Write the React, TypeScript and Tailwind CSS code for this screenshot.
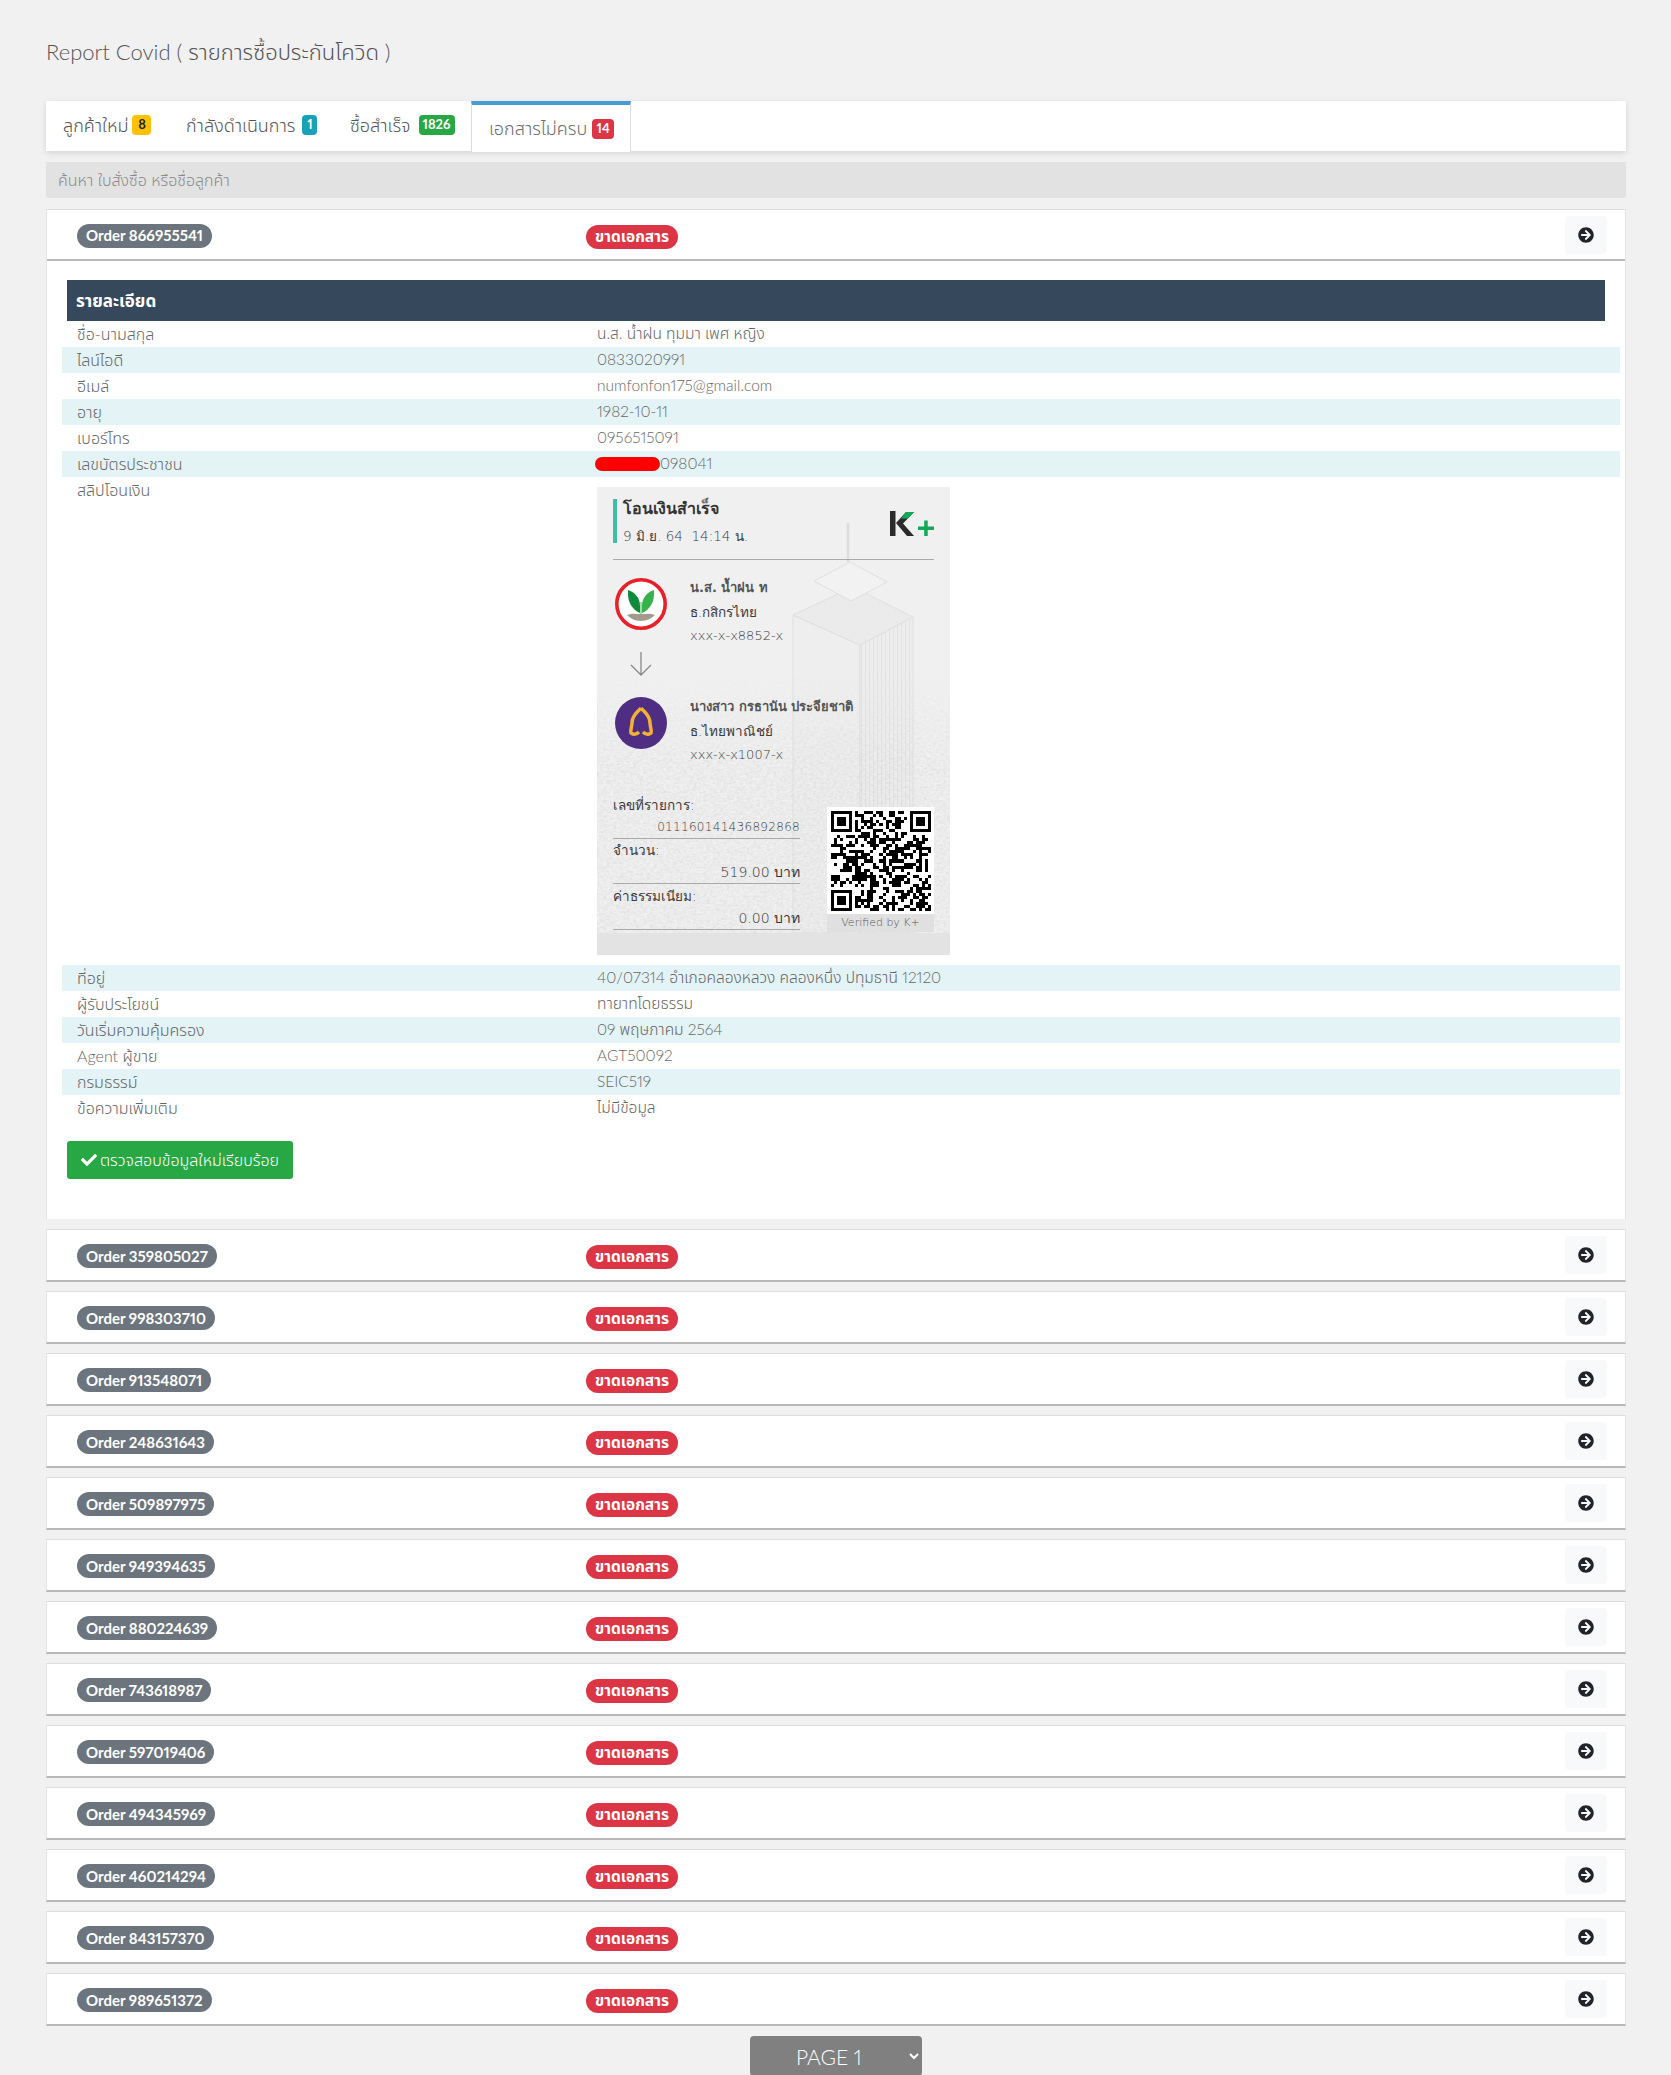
import { FaArrowCircleRight, FaCheck } from "react-icons/fa";

const font = "font-['Lato','Noto_Sans','Noto_Sans_Thai','Liberation_Sans',sans-serif]";

const orders = [
  "359805027",
  "998303710",
  "913548071",
  "248631643",
  "509897975",
  "949394635",
  "880224639",
  "743618987",
  "597019406",
  "494345969",
  "460214294",
  "843157370",
  "989651372",
];

const rowsTop = [
  { label: "ชื่อ-นามสกุล", value: "น.ส. น้ำฝน ทุมมา เพศ หญิง" },
  { label: "ไลน์ไอดี", value: "0833020991" },
  { label: "อีเมล์", value: "numfonfon175@gmail.com" },
  { label: "อายุ", value: "1982-10-11" },
  { label: "เบอร์โทร", value: "0956515091" },
];

const rowsBottom = [
  { label: "ที่อยู่", value: "40/07314 อำเภอคลองหลวง คลองหนึ่ง ปทุมธานี 12120" },
  { label: "ผู้รับประโยชน์", value: "ทายาทโดยธรรม" },
  { label: "วันเริ่มความคุ้มครอง", value: "09 พฤษภาคม 2564" },
  { label: "Agent ผู้ขาย", value: "AGT50092" },
  { label: "กรมธรรม์", value: "SEIC519" },
  { label: "ข้อความเพิ่มเติม", value: "ไม่มีข้อมูล" },
];

function Row({ label, value, striped }: { label: string; value: React.ReactNode; striped: boolean }) {
  return (
    <div className={`grid grid-cols-[535px_1fr] h-[26px] items-center ml-[15px] mr-[5px] text-[16px] font-light text-[#666] ${striped ? "bg-[#e4f3f6]" : ""}`}>
      <div className="pl-[15px]">{label}</div>
      <div className="text-[15.5px]">{value}</div>
    </div>
  );
}

function OrderHead({ id }: { id: string }) {
  return (
    <div className="flex items-center h-full pl-[30px] pr-[18px]">
      <div className="w-[509px] mt-[2px]">
        <span className="inline-flex items-center h-[24px] px-[9px] rounded-full bg-[#6c757d] text-white text-[15px] font-bold">Order {id}</span>
      </div>
      <span className="inline-flex items-center h-[24px] px-[9px] mt-[4px] rounded-full bg-[#dc3545] text-white text-[15.5px] font-bold">ขาดเอกสาร</span>
      <button className="ml-auto w-[42px] h-[38px] rounded-[4px] bg-[#f8f9fa] flex items-center justify-center">
        <FaArrowCircleRight className="text-[16px] text-[#212529]" />
      </button>
    </div>
  );
}

function Qr() {
  const n = 33;
  const cells: [number, number][] = [];
  let seed = 866955541;
  const inFinder = (x: number, y: number) => (x < 8 && y < 8) || (x > n - 9 && y < 8) || (x < 8 && y > n - 9);
  for (let y = 0; y < n; y++) {
    for (let x = 0; x < n; x++) {
      seed = (seed * 1103515245 + 12345) & 0x7fffffff;
      if (!inFinder(x, y) && (seed >> 16) % 100 < 50) cells.push([x, y]);
    }
  }
  const finder = (x: number, y: number) => (
    <g key={`${x}-${y}`}>
      <rect x={x} y={y} width="7" height="7" fill="#000" />
      <rect x={x + 1} y={y + 1} width="5" height="5" fill="#fff" />
      <rect x={x + 2} y={y + 2} width="3" height="3" fill="#000" />
    </g>
  );
  return (
    <svg viewBox={`0 0 ${n} ${n}`} className="w-[100px] h-[100px]" shapeRendering="crispEdges">
      {cells.map(([x, y]) => (
        <rect key={`${x}:${y}`} x={x} y={y} width="1" height="1" fill="#000" />
      ))}
      {finder(0, 0)}
      {finder(n - 7, 0)}
      {finder(0, n - 7)}
    </svg>
  );
}

function KbankLogo() {
  return (
    <svg viewBox="0 0 52 52" className="w-[52px] h-[52px] shrink-0">
      <circle cx="26" cy="26" r="24.2" fill="#fff" stroke="#e8202a" strokeWidth="3.6" />
      <path d="M13 12c6 2 12 7 12 16v7c-7-3-13-10-12-23z" fill="#0f8a3c" />
      <path d="M39 12c-6 2-12 7-12 16v7c7-3 13-10 12-23z" fill="#35b24a" />
      <path d="M25 24h2v13h-2z" fill="#9fdca8" />
      <path d="M12 37c5-2 9-1 14-1s9-1 14 1c-3 3-8 6-14 6s-11-3-14-6z" fill="#a39a8e" />
    </svg>
  );
}

function ScbLogo() {
  return (
    <svg viewBox="0 0 52 52" className="w-[52px] h-[52px] shrink-0">
      <circle cx="26" cy="26" r="26" fill="#4e2d82" />
      <path d="M26 11c3 4 9 7 9 15 0 4 2 7 1 10-3 2-6 1-8-1M26 11c-3 4-9 7-9 15 0 4-2 7-1 10 3 2 6 1 8-1" fill="none" stroke="#f2b134" strokeWidth="3.5" />
    </svg>
  );
}

function KPlusLogo() {
  return (
    <svg viewBox="0 0 44 26" className="w-[44px] h-[26px]">
      <rect x="0" y="0" width="5.5" height="25" fill="#2b2b2b" />
      <path d="M6 12 16 1h8L13 12.5 24 25h-7z" fill="#2b2b2b" />
      <path d="M16 1h8l-6 6.5h-7z" fill="#0fa958" />
      <rect x="28" y="15.5" width="16" height="3.5" fill="#0fa958" />
      <rect x="34.2" y="9.5" width="3.5" height="15.5" fill="#0fa958" />
    </svg>
  );
}

function SlipBackdrop() {
  return (
    <svg viewBox="0 0 353 468" className="absolute inset-0 w-full h-full">
      <defs>
        <filter id="paper" x="0" y="0" width="100%" height="100%">
          <feTurbulence type="fractalNoise" baseFrequency="0.3 0.45" numOctaves="3" seed="4" />
          <feColorMatrix values="0 0 0 0 0.62  0 0 0 0 0.62  0 0 0 0 0.62  0.8 0.8 0 0 -0.6" />
        </filter>
        <linearGradient id="fade" x1="0" y1="0" x2="0" y2="1">
          <stop offset="0" stopColor="#000" />
          <stop offset="0.42" stopColor="#000" />
          <stop offset="0.62" stopColor="#fff" />
        </linearGradient>
        <mask id="lower">
          <rect width="353" height="446" fill="url(#fade)" />
        </mask>
        <pattern id="stripes" width="4" height="4" patternUnits="userSpaceOnUse">
          <rect width="1.2" height="4" fill="#e2e2e2" />
        </pattern>
      </defs>
      <rect width="353" height="446" fill="#f0f0f0" />
      <g fill="#eeeeee" stroke="#e0e0e0" strokeWidth="1">
        <path d="M196 128 263 158v288h-67z" />
        <path d="M263 158 316 130v316h-53z" />
        <path d="M263 158 316 130v316h-53z" fill="url(#stripes)" stroke="none" />
        <path d="M196 128 256 100l60 30-53 28z" fill="#ebebeb" />
        <path d="M217 94 253 75l37 20-36 19z" fill="#f2f2f2" />
        <path d="M251 75V36" stroke="#dcdcdc" strokeWidth="2.5" />
      </g>
      <rect width="353" height="446" filter="url(#paper)" mask="url(#lower)" opacity="0.7" />
      <rect y="446" width="353" height="22" fill="#e3e3e3" />
    </svg>
  );
}

function Slip() {
  return (
    <div className="relative w-[353px] h-[468px] overflow-hidden font-['DejaVu_Sans','Noto_Sans',sans-serif] text-[#3a3a3a]">
      <SlipBackdrop />
      <div className="relative px-[16px] pt-[12px]">
        <div className="flex items-start justify-between border-b border-[#aaa] h-[61px]">
          <div className="border-l-4 border-[#3dbfa4] h-[44px] pl-[6px]">
            <div className="text-[16px] font-bold leading-[20px] text-[#333]">โอนเงินสำเร็จ</div>
            <div className="text-[13.5px] leading-[24px] mt-[5px]">9 มิ.ย. 64&nbsp;&nbsp;14:14 น.</div>
          </div>
          <div className="pt-[12px]">
            <KPlusLogo />
          </div>
        </div>
        <div className="flex gap-[23px] items-start h-[52px] mt-[18px] ml-[2px]">
          <KbankLogo />
          <div className="text-[13.5px] leading-[24px] -mt-[2px]">
            <div className="font-bold text-[13px] text-[#555]">น.ส. น้ำฝน ท</div>
            <div>ธ.กสิกรไทย</div>
            <div className="text-[13px]">xxx-x-x8852-x</div>
          </div>
        </div>
        <svg viewBox="0 0 24 24" className="w-[24px] h-[24px] ml-[16px] mt-[22px] text-[#888]" fill="none" stroke="currentColor" strokeWidth="1.3">
          <path d="M12 0v23M2 13l10 10 10-10" />
        </svg>
        <div className="flex gap-[23px] items-start h-[52px] mt-[21px] ml-[2px]">
          <ScbLogo />
          <div className="text-[13.5px] leading-[24px] -mt-[2px]">
            <div className="font-bold text-[13px] text-[#555] whitespace-nowrap">นางสาว กรธานัน ประจียชาติ</div>
            <div>ธ.ไทยพาณิชย์</div>
            <div className="text-[13px]">xxx-x-x1007-x</div>
          </div>
        </div>
        <div className="flex justify-between">
          <div className="w-[187px] text-[13.5px] leading-[22px] mt-[45px]">
            <div>เลขที่รายการ:</div>
            <div className="text-right border-b border-[#aaa] text-[12px] tracking-[0.3px]">011160141436892868</div>
            <div>จำนวน:</div>
            <div className="text-right border-b border-[#aaa] text-[14px] text-[#333]">519.00 บาท</div>
            <div className="mt-[1px]">ค่าธรรมเนียม:</div>
            <div className="text-right border-b border-[#aaa] text-[14px] text-[#333]">0.00 บาท</div>
          </div>
          <div className="w-[107px] mt-[58px]">
            <div className="bg-white h-[107px] flex items-center justify-center">
              <Qr />
            </div>
            <div className="bg-[#e0e0e0] h-[18px] text-[11px] leading-[18px] text-center text-[#555]">Verified by K+</div>
          </div>
        </div>
      </div>
    </div>
  );
}

export default function App() {
  return (
    <div className={`min-h-screen bg-[#f1f1f1] pl-[46px] pr-[45px] pt-[38px] overflow-hidden proportional-nums ${font}`}>
      <h1 className="h-[28px] text-[22px] leading-[28px] font-light text-[#555]">Report Covid ( รายการซื้อประกันโควิด )</h1>

      <div className="mt-[35px] h-[50px] bg-white shadow-[0_2px_6px_rgba(0,0,0,0.12)] flex items-stretch text-[18px] font-light text-[#555]">
        <div className="flex items-center w-[140px] pl-[17px] gap-[4px] h-[48px]">
          <span>ลูกค้าใหม่</span>
          <span className="inline-flex items-center justify-center w-[19px] h-[20px] rounded-[4px] bg-[#ffc107] text-[13px] font-bold text-[#212529]">8</span>
        </div>
        <div className="flex items-center w-[164px] gap-[7px] h-[48px]">
          <span className="whitespace-nowrap">กำลังดำเนินการ</span>
          <span className="inline-flex items-center justify-center w-[15px] h-[20px] rounded-[4px] bg-[#17a2b8] text-[13px] font-bold text-white">1</span>
        </div>
        <div className="flex items-center w-[121px] gap-[8px] h-[48px]">
          <span className="whitespace-nowrap">ซื้อสำเร็จ</span>
          <span className="inline-flex items-center justify-center w-[36px] h-[20px] rounded-[4px] bg-[#28a745] text-[13px] font-bold text-white">1826</span>
        </div>
        <div className="flex items-center w-[160px] h-[51px] pl-[17px] gap-[5px] bg-white border-t-4 border-x border-x-[#dddddd] border-t-[#4a9ad4] text-[#6b6b6b]">
          <span className="whitespace-nowrap">เอกสารไม่ครบ</span>
          <span className="inline-flex items-center justify-center w-[22px] h-[20px] rounded-[4px] bg-[#dc3545] text-[13px] font-bold text-white">14</span>
        </div>
      </div>

      <div className="mt-[11px] h-[36px] rounded-b-[2px] bg-[#e2e2e2] flex items-center pl-[12px] text-[16px] font-light text-[#8a8a8a]">
        ค้นหา ใบสั่งซื้อ หรือชื่อลูกค้า
      </div>

      <div className="mt-[11px] bg-white border-x border-[#e4e4e4]">
        <div className="h-[52px] border-t border-[#dddddd] border-b-2 border-b-[#b8b8b8]">
          <OrderHead id="866955541" />
        </div>
        <div className="pt-[19px] pb-[40px]">
          <div className="mx-[20px] h-[41px] bg-[#36495c] flex items-center pl-[9px] text-[17px] font-bold text-white">รายละเอียด</div>
          {rowsTop.map((r, i) => (
            <Row key={r.label} label={r.label} value={r.value} striped={i % 2 === 1} />
          ))}
          <Row
            label="เลขบัตรประชาชน"
            striped
            value={
              <span className="flex items-center">
                <span className="w-[65px] h-[14px] -ml-[2px] rounded-full bg-[#ff0000]" />
                <span>098041</span>
              </span>
            }
          />
          <div className="grid grid-cols-[535px_1fr] h-[488px] ml-[15px] mr-[5px] text-[16px] font-light text-[#666]">
            <div className="pl-[15px] leading-[26px]">สลิปโอนเงิน</div>
            <div className="pt-[10px]">
              <Slip />
            </div>
          </div>
          {rowsBottom.map((r, i) => (
            <Row key={r.label} label={r.label} value={r.value} striped={i % 2 === 0} />
          ))}
          <button className="mt-[20px] ml-[20px] w-[226px] h-[38px] rounded-[3px] bg-[#28a745] text-white text-[16px] font-light flex items-center justify-center gap-[3px]">
            <FaCheck className="text-[16px]" />
            ตรวจสอบข้อมูลใหม่เรียบร้อย
          </button>
        </div>
      </div>

      {orders.map((id, i) => (
        <div key={id} className={`${i === 0 ? "mt-[10px]" : "mt-[9px]"} h-[53px] bg-white border-x border-[#e4e4e4] border-t border-t-[#dddddd] border-b-2 border-b-[#b8b8b8]`}>
          <OrderHead id={id} />
        </div>
      ))}

      <div className="mt-[10px] flex justify-center">
        <select className="w-[172px] h-[40px] rounded-[4px] bg-[#808080] text-white text-[21px] font-light pl-[42px]">
          <option>PAGE 1</option>
        </select>
      </div>
    </div>
  );
}
